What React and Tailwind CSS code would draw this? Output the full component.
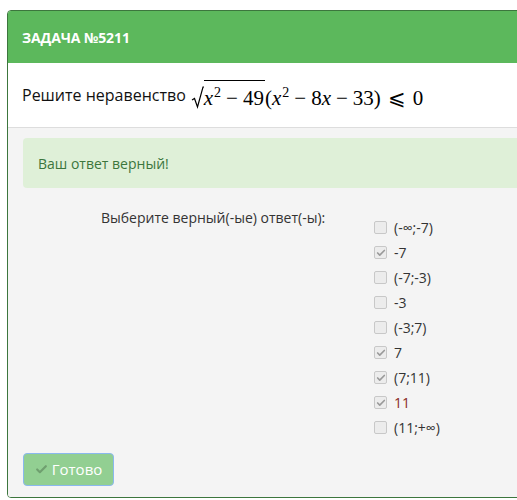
import { Check } from "lucide-react";

const options = [
  { label: "(-∞;-7)", checked: false },
  { label: "-7", checked: true },
  { label: "(-7;-3)", checked: false },
  { label: "-3", checked: false },
  { label: "(-3;7)", checked: false },
  { label: "7", checked: true },
  { label: "(7;11)", checked: true },
  { label: "11", checked: true, red: true },
  { label: "(11;+∞)", checked: false },
];

const Sup = ({ children }) => (
  <span className="text-[14px] not-italic align-[8px] ml-[1px]">{children}</span>
);

const Minus = () => <span className="mx-[5px]">−</span>;

const MathExpr = () => (
  <span className="font-['Liberation_Serif',serif] text-[21px] leading-none text-black whitespace-nowrap">
    <svg width="13" height="24" viewBox="0 0 13 24" className="inline-block align-[-5px]">
      <path d="M1 14 L3.5 12.5 L6.5 21 L12 1 L13 1" fill="none" stroke="#000" strokeWidth="1.2" />
    </svg>
    <span className="inline-block border-t-[1.5px] border-black pt-[3px] pr-[1px] leading-[18px]">
      <i>x</i>
      <Sup>2</Sup>
      <Minus />
      49
    </span>
    (<i>x</i>
    <Sup>2</Sup>
    <Minus />
    8<i>x</i>
    <Minus />
    33)
    <span className="mx-[7px]">⩽</span>
    0
  </span>
);

const OptionRow = ({ option }) => (
  <div className="flex items-center h-[25px]">
    <span className="w-[13px] h-[13px] rounded-[2px] border border-[#c8c8c8] bg-[#ececec] flex items-center justify-center">
      {option.checked && <Check size={10} strokeWidth={4} className="text-[#9a9a9a]" />}
    </span>
    <span className={`ml-[7px] text-[14px] ${option.red ? "text-[#8a2b22]" : "text-[#333]"}`}>
      {option.label}
    </span>
  </div>
);

export default function App() {
  return (
    <div className="w-[517px] h-[500px] overflow-hidden bg-white font-['Open_Sans',sans-serif]">
      <div className="ml-[7px] mt-[10px] w-[560px] h-[488px] border border-[#3c763d] rounded-tl-[4px] rounded-bl-[4px] overflow-hidden flex flex-col">
        <div className="h-[52px] bg-[#5cb85c] px-[14px] flex items-center">
          <span className="text-white font-bold text-[14px] tracking-[-0.1px]">ЗАДАЧА №5211</span>
        </div>
        <div className="h-[65px] bg-white px-[14px] flex items-center border-b border-[#dddddd]">
          <span className="text-[16px] text-[#111] mr-[5px]">Решите неравенство</span>
          <MathExpr />
        </div>
        <div className="flex-1 bg-[#f4f4f4] px-[15px] pt-[10px]">
          <div className="h-[50px] bg-[#dff0d8] rounded-[4px] px-[15px] flex items-center text-[14px] text-[#3c763d]">
            Ваш ответ верный!
          </div>
          <div className="flex mt-[20px]">
            <div className="w-[351px] pl-[78px] text-[14px] leading-[20px] text-[#333]">
              Выберите верный(-ые) ответ(-ы):
            </div>
            <div className="pt-[7px]">
              {options.map((o) => (
                <OptionRow key={o.label} option={o} />
              ))}
            </div>
          </div>
          <button className="mt-[13px] w-[91px] h-[33px] rounded-[4px] bg-[#92cf92] border border-[#8ab8ee] flex items-center justify-center gap-[4px] text-white text-[15px]">
            <Check size={13} strokeWidth={4} className="text-[#6f9f6f]" />
            Готово
          </button>
        </div>
      </div>
    </div>
  );
}
